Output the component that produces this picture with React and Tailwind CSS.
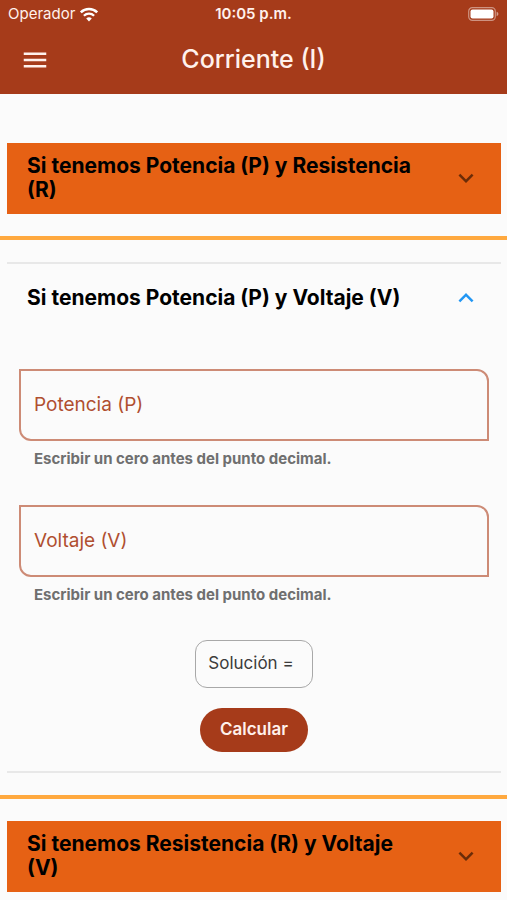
import React, { useState } from "react";
import { MdMenu, MdExpandLess, MdExpandMore } from "react-icons/md";

const SECTIONS = [
  { id: "pr", title: "Si tenemos Potencia (P) y Resistencia (R)", fields: ["Potencia (P)", "Resistencia (R)"] },
  { id: "pv", title: "Si tenemos Potencia (P) y Voltaje (V)", fields: ["Potencia (P)", "Voltaje (V)"] },
  { id: "rv", title: "Si tenemos Resistencia (R) y Voltaje (V)", fields: ["Resistencia (R)", "Voltaje (V)"] },
];

// I = sqrt(P / R), I = P / V, I = V / R
const FORMULAS = {
  pr: (p, r) => Math.sqrt(p / r),
  pv: (p, v) => p / v,
  rv: (r, v) => v / r,
};

function WifiIcon() {
  return (
    <svg width="20" height="15" viewBox="0 0 20 15" fill="none" stroke="#fff" aria-hidden="true">
      <path d="M1.8 5.4a11.6 11.6 0 0 1 16.4 0" strokeWidth="2.5" />
      <path d="M4.9 8.7a7.2 7.2 0 0 1 10.2 0" strokeWidth="2.3" />
      <path d="M10 14.4 7.2 11.5a4 4 0 0 1 5.6 0Z" fill="#fff" stroke="none" />
    </svg>
  );
}

function BatteryIcon() {
  return (
    <svg width="31" height="14" viewBox="0 0 31 14" fill="none" aria-hidden="true">
      <rect x="0.7" y="0.7" width="26.6" height="12.6" rx="3.6" stroke="#fff" strokeOpacity="0.45" strokeWidth="1.2" />
      <rect x="2.5" y="2.4" width="23" height="9.2" rx="2" fill="#fff" />
      <path d="M28.6 4.8c1.1.4 1.8 1.2 1.8 2.2s-.7 1.8-1.8 2.2Z" fill="#fff" fillOpacity="0.5" />
    </svg>
  );
}

function Field({ id, label, value, onChange }) {
  return (
    <div>
      <div className="relative">
        <input
          id={id}
          type="text"
          inputMode="decimal"
          placeholder=" "
          value={value}
          onChange={(e) => onChange(e.target.value)}
          aria-describedby={`${id}-help`}
          className="peer block h-[72px] w-full rounded-tr-xl rounded-bl-xl border-2 border-[#cd8b76] bg-transparent px-3.5 text-xl text-neutral-900 outline-none focus:border-[#a63b1a]"
        />
        <label
          htmlFor={id}
          className="pointer-events-none absolute inset-y-0 left-[15px] hidden items-center text-[19px] text-[#b04f30] peer-placeholder-shown:flex"
        >
          {label}
        </label>
      </div>
      <p id={`${id}-help`} className="mt-2 px-[15px] text-[15px] leading-5 font-bold text-[#6f6f6f]">
        Escribir un cero antes del punto decimal.
      </p>
    </div>
  );
}

function Calculator({ section }) {
  const [first, setFirst] = useState("");
  const [second, setSecond] = useState("");
  const [result, setResult] = useState("");

  const handleSubmit = (e) => {
    e.preventDefault();
    const value = FORMULAS[section.id](Number(first), Number(second));
    setResult(Number.isFinite(value) ? value.toFixed(2) : "");
  };

  return (
    <form onSubmit={handleSubmit} className="flex flex-col px-3 pt-9 pb-[19px]">
      <div className="flex flex-col gap-9">
        <Field id={`${section.id}-a`} label={section.fields[0]} value={first} onChange={setFirst} />
        <Field id={`${section.id}-b`} label={section.fields[1]} value={second} onChange={setSecond} />
      </div>
      <div className="mt-[35px] flex flex-col items-center gap-5">
        <output className="flex h-12 items-center rounded-xl border border-[#a8a8a8] pr-[18px] pl-3 text-[17px] text-[#3c3c3c]">
          Solución = {result}
        </output>
        <button
          type="submit"
          className="h-11 rounded-full bg-[#a63b1a] px-5 text-[17px] font-semibold text-[#fff1ec]"
        >
          Calcular
        </button>
      </div>
    </form>
  );
}

function Panel({ section, open, onToggle }) {
  const Chevron = open ? MdExpandLess : MdExpandMore;

  return (
    <section className={open ? "mr-[6px] ml-[7px] border-y-2 border-[#e8e8e8]" : "mr-[6px] ml-[7px] bg-[#e66114]"}>
      <h2>
        <button
          type="button"
          aria-expanded={open}
          onClick={onToggle}
          className="flex min-h-[69px] w-full items-center justify-between gap-8 px-5 pt-[11px] pb-3 text-left"
        >
          <span className="text-[21px] leading-6 font-bold text-black">{section.title}</span>
          <Chevron className={open ? "size-[30px] shrink-0 text-[#2196f3]" : "size-[30px] shrink-0 text-[#6b2c08]"} />
        </button>
      </h2>
      {open && <Calculator section={section} />}
    </section>
  );
}

export default function App() {
  const [openId, setOpenId] = useState("pv");

  return (
    <div className="min-h-screen bg-[#fbfbfb] font-['Inter',sans-serif]">
      <header className="bg-[#a63b1a] text-[#fff1ec]">
        <div className="grid h-7 grid-cols-3 items-center px-2 text-[15px]">
          <div className="flex items-center gap-1">
            <span>Operador</span>
            <WifiIcon />
          </div>
          <span className="text-center font-semibold">10:05 p.m.</span>
          <div className="flex justify-end">
            <BatteryIcon />
          </div>
        </div>
        <div className="grid h-[66px] grid-cols-[30px_1fr_30px] items-center px-5 pb-[2px]">
          <button type="button" aria-label="Menú">
            <MdMenu className="size-[30px]" />
          </button>
          <h1 className="text-center text-[25px] font-medium">Corriente (I)</h1>
        </div>
      </header>

      <main className="pt-[49px] pb-2">
        {SECTIONS.map((section, i) => (
          <React.Fragment key={section.id}>
            {i > 0 && <hr className="my-[22px] border-t-4 border-[#ffa93f]" />}
            <Panel
              section={section}
              open={openId === section.id}
              onToggle={() => setOpenId(openId === section.id ? null : section.id)}
            />
          </React.Fragment>
        ))}
      </main>
    </div>
  );
}
